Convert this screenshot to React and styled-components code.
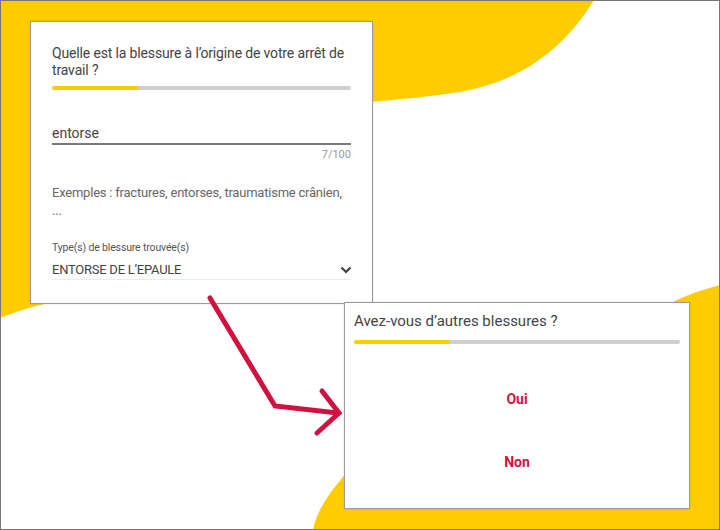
import React from 'react';
import styled, { createGlobalStyle } from 'styled-components';

const GlobalStyle = createGlobalStyle`
  body {
    margin: 0;
    font-family: Roboto, "Liberation Sans", sans-serif;
  }
`;

const yellow = '#ffcc00';
const red = '#d11240';

const Frame = styled.div`
  position: relative;
  width: 720px;
  height: 530px;
  box-sizing: border-box;
  border: 1px solid #777;
  background: #fff;
  overflow: hidden;
  display: flex;
  flex-direction: column;
`;

const Backdrop = styled.svg`
  position: absolute;
  left: -1px;
  top: -1px;
  z-index: 0;
`;

const Overlay = styled.svg`
  position: absolute;
  left: -1px;
  top: -1px;
  z-index: 3;
  pointer-events: none;
`;

const Card = styled.section`
  position: relative;
  z-index: ${(p) => p.$z};
  box-sizing: border-box;
  width: ${(p) => p.$w}px;
  height: ${(p) => p.$h}px;
  margin: ${(p) => p.$margin};
  padding: ${(p) => p.$pad};
  background: #fff;
  border: 1px solid #9c9c9c;
  box-shadow: 0 0 1px rgba(0, 0, 0, 0.25);
  display: flex;
  flex-direction: column;
`;

const Title = styled.h2`
  margin: 0;
  font-size: ${(p) => p.$size || 14}px;
  line-height: ${(p) => p.$lh || 17}px;
  letter-spacing: ${(p) => p.$ls || 0}px;
  font-weight: 400;
  color: #444;
`;

const Progress = styled.div`
  margin-top: ${(p) => p.$top}px;
  height: 4px;
  border-radius: 2px;
  background: #cfcfcf;
  overflow: hidden;
  span {
    display: block;
    height: 100%;
    border-radius: 2px;
    background: ${yellow};
  }
`;

const Field = styled.div`
  margin-top: 34px;
  font-size: 14px;
  line-height: 18px;
  color: #444;
  padding-bottom: 1px;
  border-bottom: 2px solid #7a7a7a;
`;

const Counter = styled.div`
  margin-top: 3px;
  text-align: right;
  font-size: 11px;
  line-height: 13px;
  color: #999;
`;

const Hint = styled.p`
  margin: 23px 0 0;
  font-size: 13px;
  line-height: 18px;
  letter-spacing: -0.22px;
  color: #666;
`;

const Label = styled.div`
  margin-top: 21px;
  font-size: 10.5px;
  line-height: 13px;
  letter-spacing: -0.15px;
  color: #555;
`;

const Select = styled.div`
  margin-top: 7px;
  display: flex;
  align-items: center;
  justify-content: space-between;
  font-size: 13px;
  line-height: 17px;
  letter-spacing: -0.25px;
  color: #444;
  padding-bottom: 1px;
  border-bottom: 1px solid #ececec;
  svg {
    margin-right: -1px;
  }
`;

const Choices = styled.div`
  margin-top: 23px;
  display: flex;
  flex-direction: column;
`;

const Choice = styled.button`
  height: 63px;
  border: 0;
  background: transparent;
  font-family: inherit;
  font-size: 14px;
  font-weight: 700;
  color: ${red};
  cursor: pointer;
`;

export default function App() {
  return (
    <>
      <GlobalStyle />
      <Frame>
        <Backdrop width="720" height="530" viewBox="0 0 720 530">
          <path
            fill={yellow}
            d="M0,0 L594,0 C560,55 515,82 460,92 C420,98 390,100 372,102 C250,118 180,290 50,303 C30,307 15,312 0,318 Z"
          />
          <path
            fill={yellow}
            d="M720,285 C700,290 685,296 673,302 C560,350 380,420 343,477 C328,495 316,512 313,530 L720,530 Z"
          />
        </Backdrop>

        <Card $z={1} $w={343} $h={283} $margin="20px 0 0 29px" $pad="23px 21px 0">
          <Title $ls={-0.15}>Quelle est la blessure à l’origine de votre arrêt de travail ?</Title>
          <Progress $top={7}>
            <span style={{ width: '29%' }} />
          </Progress>
          <Field>entorse</Field>
          <Counter>7/100</Counter>
          <Hint>
            Exemples : fractures, entorses, traumatisme crânien,
            <br />
            ...
          </Hint>
          <Label>Type(s) de blessure trouvée(s)</Label>
          <Select>
            ENTORSE DE L’EPAULE
            <svg width="12" height="8" viewBox="0 0 12 8">
              <path d="M1.5 1.5 L6 6 L10.5 1.5" fill="none" stroke="#444" strokeWidth="2.2" />
            </svg>
          </Select>
        </Card>

        <Card $z={2} $w={346} $h={207} $margin="-2px 0 0 343px" $pad="9px 9px 0">
          <Title $size={15} $lh={19}>Avez-vous d’autres blessures ?</Title>
          <Progress $top={9}>
            <span style={{ width: '29.5%' }} />
          </Progress>
          <Choices>
            <Choice type="button">Oui</Choice>
            <Choice type="button">Non</Choice>
          </Choices>
        </Card>

        <Overlay width="720" height="530" viewBox="0 0 720 530">
          <g fill="none" stroke={red} strokeWidth="5" strokeLinecap="round" strokeLinejoin="miter">
            <path d="M210,298 L275,406 L338,413" />
            <path d="M322,391 L339,413 L317,433" />
          </g>
        </Overlay>
      </Frame>
    </>
  );
}
